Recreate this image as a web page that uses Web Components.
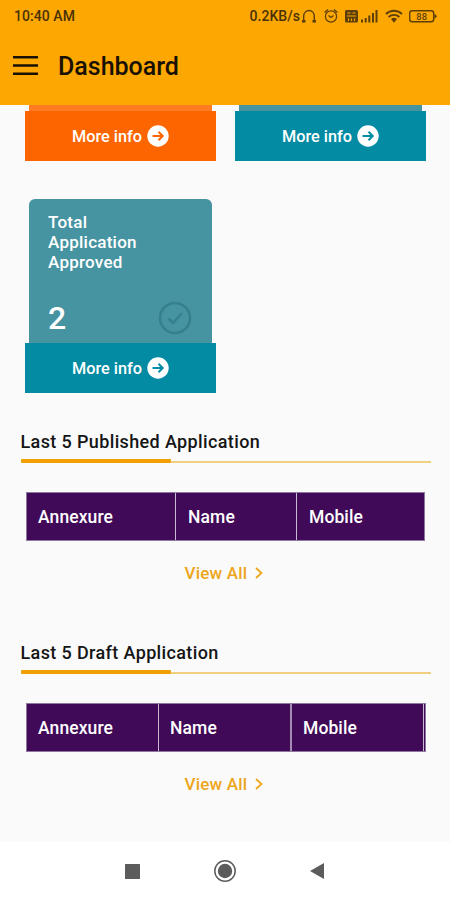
<!DOCTYPE html>
<html lang="en">
<head>
<meta charset="utf-8">
<meta name="viewport" content="width=device-width, initial-scale=1">
<title>Dashboard</title>
<style>
  html, body {
    margin: 0;
    height: 100%;
    overflow: hidden;
  }

  body {
    font-family: Roboto, "Liberation Sans", sans-serif;
    font-weight: 500;
    background: #fafafa;
    color: #151515;
  }
</style>
</head>
<body>
<dashboard-app></dashboard-app>

<script>
class StatusBar extends HTMLElement {
  constructor() {
    super();
    this.attachShadow({ mode: 'open' });
  }

  connectedCallback() {
    this.shadowRoot.innerHTML = `
    <style>
      :host {
        display: flex;
        justify-content: space-between;
        align-items: center;
        height: 32px;
        padding: 0 12px 0 14px;
        box-sizing: border-box;
        font-size: 14px;
        letter-spacing: 0.05px;
        color: #4a3208;
      }

      .status__right {
        display: flex;
        align-items: center;
      }

      svg {
        display: block;
        fill: none;
        stroke: #5e3f08;
        stroke-width: 1.4;
        letter-spacing: 0;
      }

      .fill {
        fill: #5e3f08;
        stroke: none;
      }
    </style>
    <span>${this.getAttribute('time')}</span>
    <div class="status__right">
      <span>${this.getAttribute('speed')}</span>
      <svg width="138" height="20" viewBox="0 0 138 20">
        <!-- headphones -->
        <path d="M4.500 15.500H2.500M13 15.500h2.500M3.700 15.500V10a5.300 5.500 0 0 1 10.600 0v5.500"/>
        <path class="fill" d="M2 14h3.500v2.500H2zM12.500 14H16v2.500h-3.500z"/>
        <!-- alarm -->
        <circle cx="31" cy="10.500" r="5.600" stroke-width="1.200"/>
        <path stroke-width="1.300" d="M24.500 6.500l3.500-3M37.500 6.500l-3.500-3M28.500 9.500l2.500 2 2.500-2"/>
        <!-- volte -->
        <rect class="fill" x="45" y="4" width="13" height="12.500" rx="1.500"/>
        <path stroke="#f9a602" stroke-width="1.100" d="M47.500 7h3M52.500 7h3M47 10h9M48.500 12.500v2.500M51.500 12.500v2.500M54.500 12.500v2.500"/>
        <!-- signal -->
        <path class="fill" d="M61 13.500h2v3h-2zM64.700 12h2v4.500h-2zM68.300 9.500h2v7h-2zM72 7h2v9.500h-2z"/>
        <path class="fill" d="M75.500 4h2v12.500h-2z"/>
        <!-- wifi -->
        <path stroke-width="1.900" d="M86 8a11.500 11.500 0 0 1 16 0M88.600 11a7.800 7.800 0 0 1 10.800 0"/>
        <path class="fill" d="M91 13a4.500 4.500 0 0 1 6 0l-3 3.700z"/>
        <!-- battery -->
        <rect x="109.700" y="4.700" width="24" height="11" rx="2.500"/>
        <path class="fill" d="M134.500 7.500l2.500 2.700-2.500 2.700z"/>
        <text x="121.700" y="13.600" text-anchor="middle" font-size="9.500" class="fill">88</text>
      </svg>
    </div>`;
  }
}

class AppHeader extends HTMLElement {
  constructor() {
    super();
    this.attachShadow({ mode: 'open' });
  }

  connectedCallback() {
    this.shadowRoot.innerHTML = `
    <style>
      :host {
        display: block;
        height: 105px;
        background: #fca702;
      }

      .header__row {
        display: flex;
        align-items: center;
        gap: 20px;
        height: 68px;
        padding-left: 13px;
      }

      h1 {
        margin: 0;
        font-size: 25px;
        font-weight: 500;
        color: #191204;
      }
    </style>
    <slot name="status"></slot>
    <div class="header__row">
      <svg width="25" height="20" viewBox="0 0 25 20">
        <path d="M0 1.200h25M0 9.500h25M0 17.800h25" stroke="#191204" stroke-width="2.400"/>
      </svg>
      <h1><slot></slot></h1>
    </div>`;
  }
}

class StatCard extends HTMLElement {
  constructor() {
    super();
    this.attachShadow({ mode: 'open' });
  }

  static get styles() {
    return `
    :host {
      display: block;
    }

    .card__body {
      display: flex;
      flex-direction: column;
      justify-content: space-between;
      height: 144px;
      margin: 0 4px;
      padding: 13px 19px 5px;
      box-sizing: border-box;
      border-radius: 6px 6px 0 0;
      background: var(--card-color);
      color: #fff;
    }

    :host([cut]) .card__body {
      height: 6px;
      padding: 0;
      border-radius: 0;
    }

    .card__title {
      width: 100px;
      font-size: 17px;
      line-height: 20px;
      letter-spacing: 0.25px;
    }

    .card__row {
      display: flex;
      align-items: center;
      justify-content: space-between;
      margin-right: 1px;
      font-size: 32px;
      line-height: 40px;
    }

    .card__more {
      display: flex;
      align-items: center;
      justify-content: center;
      gap: 5px;
      height: 50px;
      background: var(--more-color);
      color: #fff;
      font-size: 16.3px;
    }

    svg {
      display: block;
    }
    `;
  }

  connectedCallback() {
    const body = this.hasAttribute('cut') ? '' : `
      <div class="card__title"><slot></slot></div>
      <div class="card__row">
        <span>${this.getAttribute('count')}</span>
        <svg width="34" height="34" viewBox="0 0 34 34" fill="none" stroke="#34808d" stroke-width="2.500">
          <circle cx="17" cy="17" r="15"/>
          <path d="M10.500 17.500l4.500 4.500 9-10"/>
        </svg>
      </div>`;
    this.shadowRoot.innerHTML = `
    <style>${StatCard.styles}</style>
    <div class="card__body">${body}</div>
    <div class="card__more">
      <span>More info</span>
      <svg width="22" height="22" viewBox="0 0 22 22">
        <circle cx="11" cy="11" r="10.700" fill="#fff"/>
        <path d="M5.500 11h10M11.500 6.800l4.200 4.200-4.200 4.200" fill="none" stroke="var(--more-color)" stroke-width="2"/>
      </svg>
    </div>`;
  }
}

class RecentList extends HTMLElement {
  constructor() {
    super();
    this.attachShadow({ mode: 'open' });
  }

  static get styles() {
    return `
    :host {
      display: block;
      height: 211px;
    }

    h2 {
      margin: 0 19px 0 20.5px;
      height: 33px;
      font-size: 18px;
      line-height: 26px;
      font-weight: 500;
      letter-spacing: 0.37px;
      box-sizing: border-box;
      white-space: nowrap;
    }

    .list__line {
      display: flex;
      align-items: flex-end;
      height: 4px;
      margin: -3px 19px 0 20.5px;
    }

    .list__line::before {
      content: '';
      width: 150px;
      height: 4px;
      border-radius: 1px;
      background: #f0a000;
    }

    .list__line::after {
      content: '';
      flex: 1;
      height: 2px;
      background: #f0cf80;
    }

    .list__head {
      display: grid;
      grid-template-columns: var(--columns);
      height: 49px;
      margin: 29px 25px 0 26px;
      box-sizing: border-box;
      border: 1px solid #8f78a0;
      background: #410a58;
      color: #fff;
      font-size: 17.5px;
      letter-spacing: 0.1px;
    }

    .list__cell {
      display: flex;
      align-items: center;
      padding-left: 11px;
    }

    .list__cell + .list__cell {
      padding-left: 12px;
      border-left: 1px solid #cbb9d3;
    }

    :host([bordered]) .list__head {
      margin-right: 24px;
    }

    :host([bordered]) .list__cell + .list__cell {
      padding-left: 11px;
    }

    :host([bordered]) .list__cell:last-child {
      margin-right: 1px;
      border-left-width: 2px;
      border-left-color: #a48cb2;
      border-right: 1px solid #cbb9d3;
    }

    .list__all {
      display: flex;
      align-items: center;
      justify-content: center;
      gap: 8px;
      height: 24px;
      margin-top: 20px;
      padding-right: 2px;
      color: #eda51a;
      font-size: 17px;
      letter-spacing: 0.2px;
    }
    `;
  }

  connectedCallback() {
    const cells = ['Annexure', 'Name', 'Mobile'].map(name => `<div class="list__cell">${name}</div>`).join('');
    this.shadowRoot.innerHTML = `
    <style>${RecentList.styles}</style>
    <h2><slot></slot></h2>
    <div class="list__line"></div>
    <div class="list__head">${cells}</div>
    <div class="list__all">
      <span>View All</span>
      <svg width="8" height="12" viewBox="0 0 8 12">
        <path d="M1 1l5.500 5L1 11" fill="none" stroke="#eda51a" stroke-width="1.700"/>
      </svg>
    </div>`;
  }
}

class NavBar extends HTMLElement {
  constructor() {
    super();
    this.attachShadow({ mode: 'open' });
  }

  connectedCallback() {
    this.shadowRoot.innerHTML = `
    <style>
      :host {
        display: flex;
        align-items: center;
        justify-content: center;
        gap: 74px;
        height: 58px;
        background: #fff;
      }
    </style>
    <svg width="15" height="15" viewBox="0 0 15 15">
      <rect width="15" height="15" rx="0.500" fill="#5c5c5c"/>
    </svg>
    <svg width="22" height="22" viewBox="0 0 22 22">
      <circle cx="11" cy="11" r="10.200" fill="none" stroke="#5c5c5c" stroke-width="1.500"/>
      <circle cx="11" cy="11" r="7.200" fill="#5c5c5c"/>
    </svg>
    <svg width="15" height="16" viewBox="0 0 15 16">
      <path d="M14 0v16L0 8z" fill="#5c5c5c"/>
    </svg>`;
  }
}

class DashboardApp extends HTMLElement {
  constructor() {
    super();
    this.attachShadow({ mode: 'open' });
  }

  connectedCallback() {
    this.render();
  }

  render() {
    this.shadowRoot.innerHTML = `
    <style>
      :host {
        display: flex;
        flex-direction: column;
        width: 450px;
        height: 900px;
      }

      main {
        flex: 1;
        min-height: 0;
        overflow: hidden;
      }

      .cards {
        display: grid;
        grid-template-columns: 191px 191px;
        justify-content: space-between;
        row-gap: 38px;
        margin: 0 24px 36px 25px;
      }

      .orange {
        --card-color: #ff7c22;
        --more-color: #fd6500;
      }

      .teal {
        --card-color: #4694a1;
        --more-color: #028ba2;
      }

      .published {
        --columns: 148px 121px 1fr;
      }

      .draft {
        --columns: 131px 132px 1fr;
      }
    </style>
    <app-header>
      <status-bar slot="status" time="10:40 AM" speed="0.2KB/s"></status-bar>
      Dashboard
    </app-header>
    <main>
      <div class="cards">
        <stat-card class="orange" cut></stat-card>
        <stat-card class="teal" cut></stat-card>
        <stat-card class="teal" count="2">Total Application Approved</stat-card>
      </div>
      <recent-list class="published">Last 5 Published Application</recent-list>
      <recent-list class="draft" bordered>Last 5 Draft Application</recent-list>
    </main>
    <nav-bar></nav-bar>`;
  }
}

customElements.define('status-bar', StatusBar);
customElements.define('app-header', AppHeader);
customElements.define('stat-card', StatCard);
customElements.define('recent-list', RecentList);
customElements.define('nav-bar', NavBar);
customElements.define('dashboard-app', DashboardApp);
</script>
</body>
</html>
